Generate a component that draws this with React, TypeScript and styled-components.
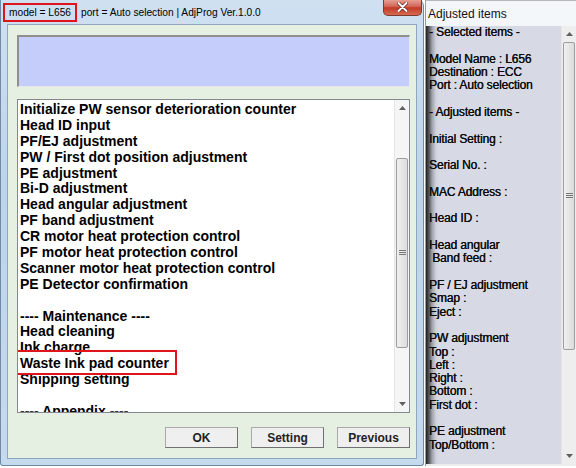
import styled, { createGlobalStyle } from 'styled-components';

const GlobalStyle = createGlobalStyle`
  html, body {
    margin: 0;
    padding: 0;
    background: #ffffff;
  }
  body {
    font-family: "Liberation Sans", Arial, sans-serif;
  }
`;

const Desktop = styled.div`
  display: flex;
  width: 576px;
  height: 468px;
  overflow: hidden;
`;

const MainWindow = styled.div`
  display: flex;
  flex-direction: column;
  width: 424px;
  height: 466px;
  flex: none;
  box-sizing: border-box;
  border: 1px solid #6f8aa6;
  border-top: none;
  border-radius: 0 6px 3px 3px;
  background: linear-gradient(180deg, #cfe0f1 0%, #bdd4eb 40%, #c6daee 100%);
`;

const TitleBar = styled.div`
  display: flex;
  align-items: center;
  height: 24px;
  padding: 0 1px 0 2px;
  gap: 4px;
  font-size: 10.2px;
  color: #000;
`;

const ModelTag = styled.span`
  display: flex;
  align-items: center;
  height: 19px;
  margin-top: 1px;
  padding: 0 4px 0 4px;
  box-sizing: border-box;
  border: 2px solid #e0141c;
`;

const TitleText = styled.span`
  flex: 1;
  margin-top: 1px;
  white-space: nowrap;
`;

const CloseButton = styled.div`
  align-self: flex-start;
  display: flex;
  align-items: center;
  justify-content: center;
  width: 39px;
  height: 17px;
  margin-top: -1px;
  box-sizing: border-box;
  border: 1px solid #7a3a32;
  border-top: none;
  border-radius: 0 0 5px 5px;
  background: linear-gradient(180deg, #e9a89c 0%, #d4695a 45%, #c23a28 55%, #d56a50 100%);
`;

const Client = styled.div`
  flex: 1;
  display: flex;
  flex-direction: column;
  margin: 1px 6px 6px 6px;
  padding: 10px 6px 10px 9px;
  box-sizing: border-box;
  background: #e5efe2;
  border: 1px solid #8fa7c0;
`;

const StatusBox = styled.div`
  height: 52px;
  flex: none;
  box-sizing: border-box;
  background: #c5cdfb;
  border-top: 2px solid #8f8f8f;
  border-left: 2px solid #8f8f8f;
  border-right: 1px solid #e8e8e8;
  border-bottom: 1px solid #e8e8e8;
`;

const ListBox = styled.div`
  display: flex;
  height: 314px;
  margin-top: 12px;
  flex: none;
  box-sizing: border-box;
  background: #ffffff;
  border: 1px solid #828790;
`;

const ListItems = styled.div`
  flex: 1;
  overflow: hidden;
  padding: 2px 0 0 2px;
  font-size: 14px;
  font-weight: bold;
  line-height: 15.9px;
  color: #000;
`;

const Item = styled.div`
  white-space: nowrap;
  height: 15.9px;
`;

const Marked = styled.span`
  position: relative;

  &::after {
    content: '';
    position: absolute;
    left: -4px;
    right: -8px;
    top: -5px;
    bottom: -4px;
    border: 2px solid #e0141c;
  }
`;

const ScrollTrack = styled.div<{ $bg: string }>`
  display: flex;
  flex-direction: column;
  width: 15px;
  flex: none;
  box-sizing: border-box;
  background: ${({ $bg }) => $bg};
  border-left: 1px solid #e6e6e6;
`;

const ScrollArrow = styled.div`
  display: flex;
  align-items: center;
  justify-content: center;
  height: 16px;
  flex: none;
`;

const ScrollRail = styled.div`
  flex: 1;
  display: flex;
  flex-direction: column;
  padding: 0 1px;
`;

const Thumb = styled.div<{ $top: number; $height: number }>`
  display: flex;
  align-items: center;
  justify-content: center;
  margin-top: ${({ $top }) => $top}px;
  height: ${({ $height }) => $height}px;
  box-sizing: border-box;
  border: 1px solid #9e9e9e;
  border-radius: 2px;
  background: linear-gradient(90deg, #f0f0f0 0%, #dcdcdc 100%);
`;

const ButtonRow = styled.div`
  display: flex;
  justify-content: flex-end;
  gap: 13px;
  margin-top: 14px;
`;

const Button = styled.div`
  display: flex;
  align-items: center;
  justify-content: center;
  width: 73px;
  height: 21px;
  box-sizing: border-box;
  background: #efefef;
  border: 1px solid #707070;
  border-top-color: #a9a9a9;
  border-left-color: #a9a9a9;
  font-size: 12px;
  font-weight: bold;
  color: #222;
`;

const SideWindow = styled.div`
  flex: 1;
  display: flex;
  flex-direction: column;
  height: 466px;
  margin-left: 1px;
  border-left: 1px solid #9a9a9a;
  border-top: 1px solid #b8b8b8;
  box-sizing: border-box;
`;

const SideTitle = styled.div`
  display: flex;
  align-items: center;
  height: 25px;
  padding-left: 2px;
  background: #f4f7fa;
  font-size: 12px;
  color: #111;
`;

const SidePanel = styled.div`
  flex: 1;
  display: flex;
  min-height: 0;
  background: linear-gradient(90deg, #1e1e1e 0px, #55575c 3px, #9ea0a8 6px, #d0d3de 10px, #d7dae5 13px);
  border-bottom: 2px solid #ececec;
`;

const SideText = styled.div`
  flex: 1;
  overflow: hidden;
  padding-left: 3px;
  font-size: 12px;
  line-height: 13.32px;
  letter-spacing: -0.15px;
  color: #0c0c0c;
  text-shadow: 0.3px 0 0 #0c0c0c;
`;

const SideLine = styled.div`
  white-space: pre;
  height: 13.32px;
`;

const mainItems = [
  'Initialize PW sensor deterioration counter',
  'Head ID input',
  'PF/EJ adjustment',
  'PW / First dot position adjustment',
  'PE adjustment',
  'Bi-D adjustment',
  'Head angular adjustment',
  'PF band adjustment',
  'CR motor heat protection control',
  'PF motor heat protection control',
  'Scanner motor heat protection control',
  'PE Detector confirmation',
  '',
  '---- Maintenance ----',
  'Head cleaning',
  'Ink charge',
  'Waste Ink pad counter',
  'Shipping setting',
  '',
  '---- Appendix ----',
];

const sideItems = [
  '- Selected items -',
  '',
  'Model Name : L656',
  'Destination : ECC',
  'Port : Auto selection',
  '',
  '- Adjusted items -',
  '',
  'Initial Setting :',
  '',
  'Serial No. :',
  '',
  'MAC Address :',
  '',
  'Head ID :',
  '',
  'Head angular',
  ' Band feed :',
  '',
  'PF / EJ adjustment',
  'Smap :',
  'Eject :',
  '',
  'PW adjustment',
  'Top :',
  'Left :',
  'Right :',
  'Bottom :',
  'First dot :',
  '',
  'PE adjustment',
  'Top/Bottom :',
];

function Arrow({ down }: { down?: boolean }) {
  return (
    <svg width="7" height="4" viewBox="0 0 7 4">
      <path d={down ? 'M0 0 L7 0 L3.5 4 Z' : 'M0 4 L7 4 L3.5 0 Z'} fill="#606060" />
    </svg>
  );
}

function Grip() {
  return (
    <svg width="7" height="6" viewBox="0 0 7 6">
      <path d="M0 0.5 H7 M0 2.5 H7 M0 4.5 H7" stroke="#777" strokeWidth="1" />
    </svg>
  );
}

function Scrollbar({ top, height, bg }: { top: number; height: number; bg: string }) {
  return (
    <ScrollTrack $bg={bg}>
      <ScrollArrow>
        <Arrow />
      </ScrollArrow>
      <ScrollRail>
        <Thumb $top={top} $height={height}>
          <Grip />
        </Thumb>
      </ScrollRail>
      <ScrollArrow>
        <Arrow down />
      </ScrollArrow>
    </ScrollTrack>
  );
}

export default function App() {
  return (
    <>
      <GlobalStyle />
      <Desktop>
        <MainWindow>
          <TitleBar>
            <ModelTag>model = L656</ModelTag>
            <TitleText>port = Auto selection | AdjProg Ver.1.0.0</TitleText>
            <CloseButton>
              <svg width="11" height="10" viewBox="0 0 11 10">
                <path d="M1.5 1 L9.5 9 M9.5 1 L1.5 9" stroke="#5a2018" strokeWidth="3.4" strokeLinecap="round" />
                <path d="M1.5 1 L9.5 9 M9.5 1 L1.5 9" stroke="#ffffff" strokeWidth="2" strokeLinecap="round" />
              </svg>
            </CloseButton>
          </TitleBar>
          <Client>
            <StatusBox />
            <ListBox>
              <ListItems>
                {mainItems.map((text, i) => (
                  <Item key={i}>
                    {text === 'Waste Ink pad counter' ? <Marked>{text}</Marked> : text}
                  </Item>
                ))}
              </ListItems>
              <Scrollbar top={42} height={190} bg="#f5f5f5" />
            </ListBox>
            <ButtonRow>
              <Button>OK</Button>
              <Button>Setting</Button>
              <Button>Previous</Button>
            </ButtonRow>
          </Client>
        </MainWindow>
        <SideWindow>
          <SideTitle>Adjusted items</SideTitle>
          <SidePanel>
            <SideText>
              {sideItems.map((text, i) => (
                <SideLine key={i}>{text}</SideLine>
              ))}
            </SideText>
            <Scrollbar top={0} height={308} bg="#eeeeee" />
          </SidePanel>
        </SideWindow>
      </Desktop>
    </>
  );
}
